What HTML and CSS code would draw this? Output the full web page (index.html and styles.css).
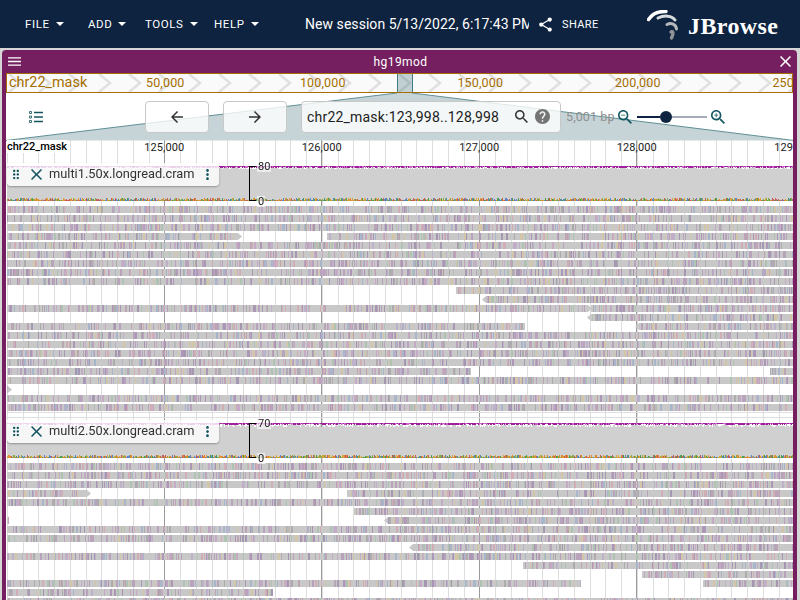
FILE: index.html
```html
<!DOCTYPE html>
<html lang="en">
<head>
<meta charset="utf-8">
<title>JBrowse</title>
<link rel="stylesheet" href="styles.css">
</head>
<body>
<header class="appbar">
  <nav class="menu">
    <button class="menu-item menu-file">File<svg class="caret" viewBox="7 10 10 5"><path d="M7 10l5 5 5-5z"/></svg></button>
    <button class="menu-item menu-add">Add<svg class="caret" viewBox="7 10 10 5"><path d="M7 10l5 5 5-5z"/></svg></button>
    <button class="menu-item menu-tools">Tools<svg class="caret" viewBox="7 10 10 5"><path d="M7 10l5 5 5-5z"/></svg></button>
    <button class="menu-item menu-help">Help<svg class="caret" viewBox="7 10 10 5"><path d="M7 10l5 5 5-5z"/></svg></button>
  </nav>
  <div class="session">New session 5/13/2022, 6:17:43 PM</div>
  <button class="share"><svg class="share-icon" viewBox="0 0 24 24"><path d="M18 16.08c-.76 0-1.44.3-1.96.77L8.91 12.7c.05-.23.09-.46.09-.7s-.04-.47-.09-.7l7.05-4.11c.54.5 1.25.81 2.04.81 1.66 0 3-1.34 3-3s-1.34-3-3-3-3 1.34-3 3c0 .24.04.47.09.7L8.04 9.81C7.5 9.31 6.79 9 6 9c-1.66 0-3 1.34-3 3s1.34 3 3 3c.79 0 1.5-.31 2.04-.81l7.12 4.16c-.05.21-.08.43-.08.65 0 1.61 1.31 2.92 2.92 2.92 1.61 0 2.92-1.31 2.92-2.92s-1.31-2.92-2.92-2.92z"/></svg>Share</button>
  <div class="logo">
    <svg class="logo-mark" viewBox="0 0 32 32" fill="none" stroke-linecap="round">
      <path d="M1.5 9.5C5 4 11 1 19 1.5" stroke="#fff" stroke-width="3.4"/>
      <path d="M11 8C17 5 25 5.500 28 10" stroke="#d8dcdf" stroke-width="3"/>
      <path d="M20 14.500C24 12.500 29 14 29.500 19" stroke="#b4b8bb" stroke-width="3"/>
      <path d="M24 22C26 20.500 27 23 24.500 28" stroke="#8f9396" stroke-width="3.400"/>
    </svg>
    <span class="logo-text">JBrowse</span>
  </div>
</header>

<main class="view">
  <div class="view-title">
    <svg class="title-menu" viewBox="3 6 18 12"><path d="M3 18h18v-2H3v2zm0-5h18v-2H3v2zm0-7v2h18V6H3z"/></svg>
    <span class="title-name">hg19mod</span>
    <svg class="title-close" viewBox="5 5 14 14"><path d="M19 6.41 17.59 5 12 10.59 6.41 5 5 6.41 10.59 12 5 17.59 6.41 19 12 13.41 17.59 19 19 17.59 13.41 12z"/></svg>
  </div>

  <div class="overview">
    <svg class="chevrons" width="788" height="18">
      <defs><pattern id="chev" x="15" width="30" height="18" patternUnits="userSpaceOnUse"><path d="M17 0l11 9-11 9" fill="none" stroke="#e0e0e0" stroke-width="2.500"/></pattern></defs>
      <rect width="788" height="18" fill="url(#chev)"/>
    </svg>
    <span class="ov-chr">chr22_mask</span>
    <div class="ov-ticks"><span>50,000</span><span>100,000</span><span>150,000</span><span>200,000</span><span>250,000</span></div>
    <div class="ov-window"></div>
  </div>

  <div class="controls">
    <svg class="zoom-wedge" width="788" height="48" viewBox="0 0 788 48">
      <path d="M391 0L0 47.500H788L406 0z" fill="#c6d4d7"/>
      <path d="M391 0L0 47.500M406 0L788 47.500" fill="none" stroke="#5f8f96" stroke-width="1"/>
    </svg>
    <svg class="tracks-icon" viewBox="0 0 14 12" fill="none" stroke="#135560">
      <path d="M5 1.500H14M5 6H14M5 10.500H14" stroke-width="1.500"/>
      <path d="M.5.500h2v2h-2zM.5 5h2v2h-2zM.5 9.500h2v2h-2z" stroke-width=".8"/>
    </svg>
    <button class="nav-btn"><svg class="nav-icon" viewBox="0 0 24 24"><path d="M20 11H7.830l5.590-5.590L12 4l-8 8 8 8 1.410-1.410L7.830 13H20v-2z"/></svg></button>
    <button class="nav-btn"><svg class="nav-icon" viewBox="0 0 24 24"><path d="M12 4l-1.410 1.410L16.170 11H4v2h12.170l-5.580 5.590L12 20l8-8z"/></svg></button>
    <div class="search">
      <span class="search-text">chr22_mask:123,998..128,998</span>
      <svg class="search-icon" viewBox="3 3 17.500 17.500"><path d="M15.500 14h-.79l-.28-.27C15.410 12.590 16 11.110 16 9.500 16 5.910 13.090 3 9.500 3S3 5.910 3 9.500 5.910 16 9.500 16c1.610 0 3.090-.59 4.230-1.570l.27.28v.79l5 4.990L20.490 19l-4.990-5zm-6 0C7.010 14 5 11.990 5 9.500S7.010 5 9.500 5 14 7.010 14 9.500 11.990 14 9.500 14z"/></svg>
      <svg class="help-icon" viewBox="2 2 20 20"><path d="M12 2C6.480 2 2 6.480 2 12s4.480 10 10 10 10-4.480 10-10S17.520 2 12 2zm1 17h-2v-2h2v2zm2.070-7.750l-.9.920C13.450 12.900 13 13.500 13 15h-2v-.5c0-1.100.45-2.100 1.170-2.830l1.240-1.260c.37-.36.59-.86.59-1.410 0-1.100-.9-2-2-2s-2 .9-2 2H8c0-2.210 1.790-4 4-4s4 1.790 4 4c0 .88-.36 1.680-.93 2.250z"/></svg>
    </div>
    <span class="bp">5,001 bp</span>
    <svg class="zoom-icon" viewBox="3 3 17.500 17.500"><path d="M15.500 14h-.79l-.28-.27C15.410 12.590 16 11.110 16 9.500 16 5.910 13.090 3 9.500 3S3 5.910 3 9.500 5.910 16 9.500 16c1.610 0 3.090-.59 4.230-1.570l.27.28v.79l5 4.990L20.490 19l-4.990-5zm-6 0C7.010 14 5 11.990 5 9.500S7.010 5 9.500 5 14 7.010 14 9.500 11.990 14 9.500 14zM7 9h5v1H7z"/></svg>
    <div class="slider"><span class="slider-fill"></span><span class="slider-thumb"></span><span class="slider-rest"></span></div>
    <svg class="zoom-icon" viewBox="3 3 17.500 17.500"><path d="M15.500 14h-.79l-.28-.27C15.410 12.590 16 11.110 16 9.500 16 5.910 13.090 3 9.500 3S3 5.910 3 9.500 5.910 16 9.500 16c1.610 0 3.090-.59 4.230-1.570l.27.28v.79l5 4.990L20.490 19l-4.990-5zm-6 0C7.010 14 5 11.990 5 9.500S7.010 5 9.500 5 14 7.010 14 9.500 11.990 14 9.500 14zM12 10h-2v2H9v-2H7V9h2V7h1v2h2v1z"/></svg>
  </div>

  <div class="tracks">
    <div class="ruler">
      <span class="ruler-chr">chr22_mask</span>
      <div class="ruler-ticks"><span>125,000</span><span>126,000</span><span>127,000</span><span>128,000</span><span>129,000</span></div>
    </div>

    <section class="track track-one">
      <canvas class="pileup" id="pileup1" width="787" height="249"></canvas>
      <div class="track-label">
        <svg class="drag-icon" viewBox="7 4 10 16"><path d="M11 18c0 1.100-.9 2-2 2s-2-.9-2-2 .9-2 2-2 2 .9 2 2zm-2-8c-1.100 0-2 .9-2 2s.9 2 2 2 2-.9 2-2-.9-2-2-2zm0-6c-1.100 0-2 .9-2 2s.9 2 2 2 2-.9 2-2-.9-2-2-2zm6 4c1.100 0 2-.9 2-2s-.9-2-2-2-2 .9-2 2 .9 2 2 2zm0 2c-1.100 0-2 .9-2 2s.9 2 2 2 2-.9 2-2-.9-2-2-2zm0 6c-1.100 0-2 .9-2 2s.9 2 2 2 2-.9 2-2-.9-2-2-2z"/></svg>
        <svg class="x-icon" viewBox="5 5 14 14"><path d="M19 6.410 17.590 5 12 10.590 6.410 5 5 6.410 10.590 12 5 17.590 6.410 19 12 13.410 17.590 19 19 17.590 13.410 12z"/></svg>
        <span class="track-name">multi1.50x.longread.cram</span>
        <svg class="more-icon" viewBox="10 4 4 16"><path d="M12 8c1.100 0 2-.9 2-2s-.9-2-2-2-2 .9-2 2 .9 2 2 2zm0 2c-1.100 0-2 .9-2 2s.9 2 2 2 2-.9 2-2-.9-2-2-2zm0 6c-1.100 0-2 .9-2 2s.9 2 2 2 2-.9 2-2-.9-2-2-2z"/></svg>
      </div>
      <div class="axis"><span class="axis-max">80</span><span class="axis-min">0</span></div>
    </section>

    <section class="track track-two">
      <canvas class="pileup" id="pileup2" width="787" height="180"></canvas>
      <div class="track-label">
        <svg class="drag-icon" viewBox="7 4 10 16"><path d="M11 18c0 1.100-.9 2-2 2s-2-.9-2-2 .9-2 2-2 2 .9 2 2zm-2-8c-1.100 0-2 .9-2 2s.9 2 2 2 2-.9 2-2-.9-2-2-2zm0-6c-1.100 0-2 .9-2 2s.9 2 2 2 2-.9 2-2-.9-2-2-2zm6 4c1.100 0 2-.9 2-2s-.9-2-2-2-2 .9-2 2 .9 2 2 2zm0 2c-1.100 0-2 .9-2 2s.9 2 2 2 2-.9 2-2-.9-2-2-2zm0 6c-1.100 0-2 .9-2 2s.9 2 2 2 2-.9 2-2-.9-2-2-2z"/></svg>
        <svg class="x-icon" viewBox="5 5 14 14"><path d="M19 6.410 17.590 5 12 10.590 6.410 5 5 6.410 10.590 12 5 17.590 6.410 19 12 13.410 17.590 19 19 17.590 13.410 12z"/></svg>
        <span class="track-name">multi2.50x.longread.cram</span>
        <svg class="more-icon" viewBox="10 4 4 16"><path d="M12 8c1.100 0 2-.9 2-2s-.9-2-2-2-2 .9-2 2 .9 2 2 2zm0 2c-1.100 0-2 .9-2 2s.9 2 2 2 2-.9 2-2-.9-2-2-2zm0 6c-1.100 0-2 .9-2 2s.9 2 2 2 2-.9 2-2-.9-2-2-2z"/></svg>
      </div>
      <div class="axis"><span class="axis-max">70</span><span class="axis-min">0</span></div>
    </section>
  </div>
</main>
<script src="app.js"></script>
</body>
</html>
```
FILE: styles.css
```css
* { box-sizing: border-box; }
html, body { margin: 0; height: 100%; }
body {
  width: 800px;
  height: 600px;
  overflow: hidden;
  background: #d6d6d6;
  font-family: Roboto, "Liberation Sans", sans-serif;
  color: #212121;
}
button { font: inherit; color: inherit; background: none; border: 0; padding: 0; }

/* App bar */
.appbar {
  height: 48px;
  background: #0d233f;
  color: #fff;
  display: flex;
  align-items: center;
}
.menu { display: flex; margin-left: 25px; width: 280px; flex: none; }
.menu-item {
  display: flex;
  align-items: center;
  font-size: 11.5px;
  letter-spacing: .6px;
  text-transform: uppercase;
}
.menu-file { width: 63px; }
.menu-add { width: 57px; }
.menu-tools { width: 69px; }
.caret { width: 8px; height: 4px; margin-left: 6px; fill: #fff; }
.session {
  width: 224px;
  flex: none;
  overflow: hidden;
  white-space: nowrap;
  font-size: 14px;
  letter-spacing: .05px;
}
.share {
  display: flex;
  align-items: center;
  margin-left: 8px;
  width: 110px;
  flex: none;
  font-size: 11px;
  letter-spacing: .4px;
  text-transform: uppercase;
}
.share-icon { width: 17px; height: 17px; margin-right: 8px; fill: #fff; }
.logo { display: flex; align-items: center; }
.logo-mark { width: 32px; height: 32px; margin-top: 4px; }
.logo-text {
  margin-left: 9px;
  margin-top: 4px;
  font-family: "Liberation Serif", serif;
  font-size: 24px;
  font-weight: 700;
  letter-spacing: .4px;
  line-height: 1;
}

/* View */
.view {
  margin: 2px 3px 0 2px;
  height: 550px;
  overflow: hidden;
  background: #fff;
  border-left: 4px solid #751f61;
  border-right: 4px solid #751f61;
  border-radius: 4px 4px 0 0;
}
.view-title {
  height: 23px;
  margin: 0 -4px;
  background: #751f61;
  color: #fff;
  display: flex;
  align-items: center;
  justify-content: space-between;
  padding: 0 6px;
  font-size: 12px;
  letter-spacing: .4px;
}
.title-menu { width: 13px; height: 9px; fill: #fff; }
.title-close { width: 11px; height: 11px; fill: #fff; }

/* Overview */
.overview {
  position: relative;
  height: 20px;
  background: #fafafa;
  border: 1px solid #a66e00;
  color: #a66e00;
  overflow: hidden;
}
.chevrons { position: absolute; left: 0; top: 0; }
.ov-chr { position: absolute; left: 2px; top: 0; font-size: 14.4px; line-height: 18px; }
.ov-ticks { position: relative; display: flex; padding-left: 79.500px; font-size: 12.500px; line-height: 17px; letter-spacing: .15px; }
.ov-ticks span { flex: none; width: 157.500px; text-align: center; }
.ov-window {
  position: absolute;
  left: 390px;
  top: -1px;
  width: 16px;
  height: 20px;
  background: rgba(19, 85, 96, .25);
  border: 1px solid #3f7a85;
}

/* Controls */
.controls {
  position: relative;
  height: 47px;
  display: flex;
  align-items: center;
}
.zoom-wedge { position: absolute; left: 0; top: 0; }
.tracks-icon { position: relative; width: 14px; height: 12px; margin-left: 23px; margin-right: 88px; }
.nav-btn {
  position: relative;
  width: 64px;
  height: 32px;
  margin-left: 14px;
  display: flex;
  align-items: center;
  justify-content: center;
  border: 1px solid #c8c8c8;
  border-radius: 4px;
  background: rgba(255, 255, 255, .8);
}
.nav-icon { width: 18px; height: 18px; fill: #333; }
.search {
  position: relative;
  width: 260px;
  height: 32px;
  margin-left: 14px;
  display: flex;
  align-items: center;
  padding-left: 5px;
  border: 1px solid #c8c8c8;
  border-radius: 4px;
  background: rgba(255, 255, 255, .8);
}
.search-text { width: 208px; font-size: 14px; letter-spacing: .2px; white-space: nowrap; }
.search-icon { width: 13px; height: 13px; fill: #333; }
.help-icon { width: 15px; height: 15px; margin-left: 7px; fill: #757575; }
.bp { position: relative; margin-left: 5px; width: 52px; font-size: 12.500px; color: #8f8f8f; letter-spacing: .1px; white-space: nowrap; }
.zoom-icon { position: relative; width: 14px; height: 14px; fill: #135560; flex: none; }
.slider { position: relative; display: flex; align-items: center; width: 70px; margin: 0 4px 0 5px; }
.slider-fill { width: 23px; height: 2px; background: #0d233f; }
.slider-thumb { width: 12px; height: 12px; border-radius: 50%; background: #0d233f; }
.slider-rest { flex: 1; height: 2px; background: #a4abb6; }

/* Tracks */
.tracks {
  height: 460px;
  background-color: #fff;
  background-image:
    repeating-linear-gradient(90deg, #9a9a9a 0 1px, transparent 1px 157.5px),
    repeating-linear-gradient(90deg, #dedede 0 1px, transparent 1px 15.75px);
  background-position: 158px 0, 1px 0;
  background-repeat: no-repeat;
}
.ruler { position: relative; height: 23px; overflow: hidden; }
.ruler-chr { position: absolute; left: 1px; top: 0; font-size: 11px; font-weight: 500; line-height: 13px; color: #000; background: #fff; }
.ruler-ticks { display: flex; padding: 1px 0 0 79.500px; font-size: 11px; line-height: 14px; letter-spacing: .1px; }
.ruler-ticks span { flex: none; width: 157.500px; text-align: center; }
.track { position: relative; }
.track-one { height: 250px; border-bottom: 1px solid #dedede; }
.track-two { margin-top: 4px; padding-top: 2px; border-top: 1px solid #dedede; }
.pileup { display: block; }
.track-label {
  position: absolute;
  left: 1px;
  top: 0;
  width: 212px;
  height: 23px;
  display: flex;
  align-items: center;
  padding-left: 6px;
  background: rgba(255, 255, 255, .8);
  border-radius: 0 0 4px 4px;
  box-shadow: 0 1px 2px rgba(0, 0, 0, .3);
}
.track-two .track-label { top: 2px; }
.drag-icon { width: 6px; height: 11px; fill: #135560; }
.x-icon { width: 11px; height: 11px; margin-left: 12px; fill: #135560; }
.track-name { margin: -2px 0 0 7px; width: 157px; font-size: 12.8px; white-space: nowrap; color: #333; }
.more-icon { width: 3px; height: 11px; fill: #135560; }
.axis {
  position: absolute;
  left: 243px;
  top: 3px;
  width: 7px;
  height: 35px;
  border: 1px solid #000;
  border-right: 0;
}
.track-two .axis { top: 5px; }
.axis span {
  position: absolute;
  left: 7px;
  font-size: 11px;
  line-height: 11px;
  padding: 0 1px;
  color: #222;
  background: rgba(255, 255, 255, .6);
}
.axis-max { top: -6px; }
.axis-min { bottom: -7px; }
```
FILE: app.js
```js
(function () {
  var seed = 12345;
  function rnd() {
    seed = (seed * 1664525 + 1013904223) >>> 0;
    return seed / 4294967296;
  }
  var ticks = ['#b9a2bc', '#b9a2bc', '#ad97b6', '#c4aac4', '#bda5b6', '#acacac', '#a8b6cc',
               '#aec3b2', '#d3c5a8', '#d1aeb5', '#a596b2', '#bdb2c9'];
  var L = 7, R = 793;

  function segment(ctx, y, a, b, arrow) {
    ctx.fillStyle = '#c8c8c8';
    ctx.fillRect(a - 6, y, b - a, 7);
    var x = a;
    while (x < b) {
      if (rnd() < 0.34) {
        var w = rnd() < 0.25 ? 2 : 1;
        ctx.fillStyle = ticks[Math.floor(rnd() * ticks.length)];
        ctx.fillRect(x - 6, y, Math.min(w, b - x), 7);
        x += w;
      } else {
        x += 1;
      }
    }
    ctx.fillStyle = '#c8c8c8';
    if (arrow === 'r') {
      ctx.beginPath(); ctx.moveTo(b - 6, y); ctx.lineTo(b - 2, y + 3.5); ctx.lineTo(b - 6, y + 7); ctx.fill();
    }
    if (arrow === 'l') {
      ctx.beginPath(); ctx.moveTo(a - 6, y); ctx.lineTo(a - 10, y + 3.5); ctx.lineTo(a - 6, y + 7); ctx.fill();
    }
  }

  function coverage(ctx, top, bottom, jitter) {
    var cols = ['#e08a2c', '#4f9d4f', '#d9a43a', '#5a86c8', '#c85a5a', '#8fa84a'];
    for (var x = L; x < R; x++) {
      var px = x - 6, h = top + 1 + Math.floor(rnd() * jitter);
      ctx.fillStyle = '#d0d0d0';
      ctx.fillRect(px, h, 1, bottom - h);
      ctx.fillStyle = rnd() < 0.7 ? '#a01f9c' : '#c96bc4';
      ctx.fillRect(px, top, 1, rnd() < 0.6 ? 2 : 1);
      var n = 1 + Math.floor(rnd() * 3);
      ctx.fillStyle = cols[Math.floor(rnd() * cols.length)];
      ctx.fillRect(px, bottom - n, 1, n);
    }
  }

  // Each row: list of [start, end, arrow]. Rows step 9px.
  var F = [[L, R]];
  var rows1 = [F, F, F, [[L, 238, 'r'], [327, R]], F, F, [[L, 157], [157, R, 'l']], F, F,
    [[456, R]], [[486, R, 'l']], [[L, 588, 'r'], [591, R]], [[591, R, 'l']],
    [[L, 525], [639, R, 'l']], F, F, F, F, [[L, 471], [770, R]], F, [[L, 8, 'r']], F, F];
  var rows2 = [F, F, F, [[L, 87, 'r'], [347, R]], F, [[354, R]], [[L, 9], [388, R, 'l']], F, F,
    [[413, R, 'l']], F, [[523, R]], [[642, R]], [[L, 581], [703, R]], [[L, 273]], F];

  function draw(id, rows, top, bottom, first, jitter) {
    var ctx = document.getElementById(id).getContext('2d');
    coverage(ctx, top, bottom, jitter);
    rows.forEach(function (row, i) {
      row.forEach(function (s) { segment(ctx, first + i * 9, s[0], s[1], s[2]); });
    });
  }
  draw('pileup1', rows1, 3, 38, 43, 3);
  draw('pileup2', rows2, 3, 38, 43, 4);
})();
```
